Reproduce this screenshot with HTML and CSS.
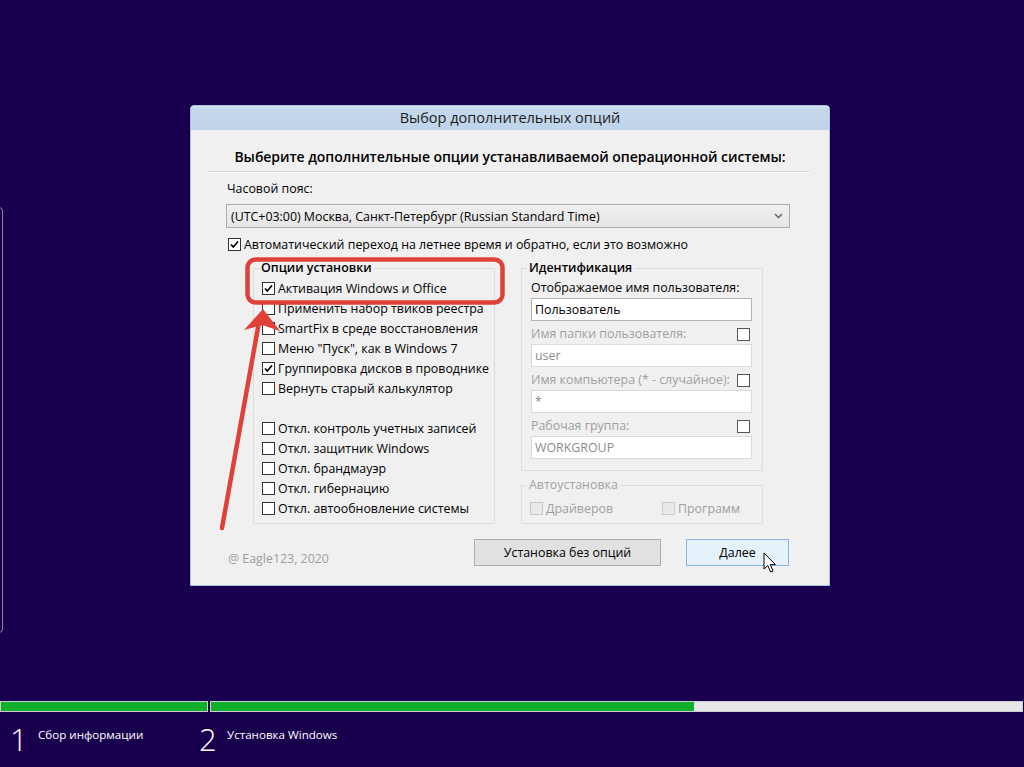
FILE: index.html
```html
<!DOCTYPE html>
<html lang="ru">
<head>
<meta charset="utf-8">
<title>Выбор дополнительных опций</title>
<link rel="stylesheet" href="styles.css">
</head>
<body>
<div class="screen">
  <div class="side-window"></div>

  <div class="dialog">
    <div class="titlebar">Выбор дополнительных опций</div>
    <div class="heading">Выберите дополнительные опции устанавливаемой операционной системы:</div>
    <div class="sep"></div>
    <div class="tz-label">Часовой пояс:</div>
    <div class="combo">
      <span>(UTC+03:00) Москва, Санкт-Петербург (Russian Standard Time)</span>
      <svg class="chev" width="9" height="6" viewBox="0 0 9 6"><polyline points="1,1 4.5,4.5 8,1" fill="none" stroke="#6d6d6d" stroke-width="1.6"/></svg>
    </div>
    <label class="row dst"><span class="cb on"><svg viewBox="0 0 11 11"><polyline points="2,5.5 4.3,8 9,2.5" fill="none" stroke="#000" stroke-width="1.7"/></svg></span>Автоматический переход на летнее время и обратно, если это возможно</label>

    <div class="groups">
      <fieldset class="grp opts">
        <legend>Опции установки</legend>
        <label class="row"><span class="cb on"><svg viewBox="0 0 11 11"><polyline points="2,5.5 4.3,8 9,2.5" fill="none" stroke="#000" stroke-width="1.7"/></svg></span>Активация Windows и Office</label>
        <label class="row"><span class="cb"></span>Применить набор твиков реестра</label>
        <label class="row"><span class="cb"></span>SmartFix в среде восстановления</label>
        <label class="row"><span class="cb"></span>Меню "Пуск", как в Windows 7</label>
        <label class="row"><span class="cb on"><svg viewBox="0 0 11 11"><polyline points="2,5.5 4.3,8 9,2.5" fill="none" stroke="#000" stroke-width="1.7"/></svg></span>Группировка дисков в проводнике</label>
        <label class="row"><span class="cb"></span>Вернуть старый калькулятор</label>
        <div class="row blank"></div>
        <label class="row"><span class="cb"></span>Откл. контроль учетных записей</label>
        <label class="row"><span class="cb"></span>Откл. защитник Windows</label>
        <label class="row"><span class="cb"></span>Откл. брандмауэр</label>
        <label class="row"><span class="cb"></span>Откл. гибернацию</label>
        <label class="row"><span class="cb"></span>Откл. автообновление системы</label>
      </fieldset>

      <div class="right-col">
        <fieldset class="grp ident">
          <legend>Идентификация</legend>
          <div class="flabel">Отображаемое имя пользователя:</div>
          <div class="field active">Пользователь</div>
          <div class="flabel dim">Имя папки пользователя:<span class="cb"></span></div>
          <div class="field">user</div>
          <div class="flabel dim">Имя компьютера (* - случайное):<span class="cb"></span></div>
          <div class="field">*</div>
          <div class="flabel dim">Рабочая группа:<span class="cb"></span></div>
          <div class="field">WORKGROUP</div>
        </fieldset>
        <fieldset class="grp auto">
          <legend>Автоустановка</legend>
          <div class="auto-row">
            <span class="arow"><span class="cb off"></span>Драйверов</span>
            <span class="arow"><span class="cb off"></span>Программ</span>
          </div>
        </fieldset>
      </div>
    </div>

    <div class="footer">
      <span class="copy">@ Eagle123, 2020</span>
      <button class="btn">Установка без опций</button>
      <button class="btn primary">Далее</button>
    </div>
  </div>

  <div class="progress">
    <div class="seg seg1"><div class="fill" style="width:100%"></div></div>
    <div class="seg seg2"><div class="fill" style="width:59.6%"></div></div>
  </div>
  <div class="steps">
    <div class="step s1"><span class="num">1</span><span class="stxt">Сбор информации</span></div>
    <div class="step s2"><span class="num">2</span><span class="stxt">Установка Windows</span></div>
  </div>

  <svg class="annot" width="1024" height="767" viewBox="0 0 1024 767">
    <rect x="247.5" y="259.5" width="255" height="43" rx="8" fill="none" stroke="#df4139" stroke-width="4.5"/>
    <line x1="222" y1="528" x2="259" y2="322" stroke="#df4139" stroke-width="4.5" stroke-linecap="round"/>
    <polygon points="263,309 280,331 262,325 244,330" fill="#df4139"/>
  </svg>

  <svg class="cursor" width="14" height="22" viewBox="0 0 14 22">
    <path d="M1 1 L1 17 L4.8 13.4 L7.6 20 L10 19 L7.3 12.6 L12.4 12.6 Z" fill="#fff" stroke="#000" stroke-width="1" stroke-linejoin="round"/>
  </svg>
</div>
</body>
</html>
```

FILE: styles.css
```css
* { box-sizing: border-box; }
html, body { margin: 0; padding: 0; }
body {
  background: #18004e;
  font-family: "Open Sans", "Noto Sans", "DejaVu Sans", sans-serif;
  font-size: 12.4px;
  color: #000;
}
.screen {
  position: relative;
  width: 1024px;
  height: 767px;
  overflow: hidden;
  display: flex;
  flex-direction: column;
}
.side-window {
  position: absolute;
  left: -10px;
  top: 207px;
  width: 13px;
  height: 426px;
  border: 1px solid #8a8497;
  border-radius: 4px;
}

/* dialog */
.dialog {
  margin: 105px 0 0 190px;
  width: 640px;
  height: 481px;
  background: #f0f0f0;
  border: 1px solid #a9c1da;
  border-radius: 4px 4px 0 0;
  display: flex;
  flex-direction: column;
}
.titlebar {
  height: 24px;
  line-height: 24px;
  text-align: center;
  font-size: 14.5px;
  color: #1a1a1a;
  background: linear-gradient(#d2e2f2 0, #c4d8ec 3px, #bfd4ea 100%);
  border-radius: 3px 3px 0 0;
  flex: none;
}
.heading {
  margin-top: 17px;
  line-height: 20px;
  text-align: center;
  font-size: 14px;
  font-weight: 600;
  letter-spacing: -0.05px;
}
.sep {
  margin: 4px 19px 0 18px;
  border-top: 1px solid #d6d6d6;
  border-bottom: 1px solid #fbfbfb;
}
.tz-label {
  margin: 8px 0 0 36px;
  line-height: 16px;
}
.combo {
  margin: 7px 39px 0 35px;
  height: 24px;
  border: 1px solid #adadad;
  background: linear-gradient(#efefef, #e6e6e6);
  display: flex;
  align-items: center;
  justify-content: space-between;
  padding: 0 6px 0 4px;
}
.chev { display: block; }

.row {
  display: flex;
  align-items: center;
  height: 20px;
  white-space: nowrap;
}
.row.dst {
  margin: 6px 0 0 37px;
}
.cb {
  width: 13px;
  height: 13px;
  border: 1px solid #333;
  background: #fff;
  margin-right: 3px;
  flex: none;
  display: inline-flex;
  align-items: center;
  justify-content: center;
}
.cb svg { width: 11px; height: 11px; display: block; }
.cb.off {
  border-color: #c9c9c9;
  background: #e9e9e9;
}

/* groups */
.groups {
  display: flex;
  align-items: flex-start;
  margin: 6px 0 0 62px;
  gap: 26px;
}
.grp {
  margin: 0;
  border: 1px solid #dcdcdc;
  width: 242px;
}
.grp legend {
  padding: 0 2px;
  line-height: 16px;
  font-weight: 600;
  font-size: 12.4px;
}
.opts {
  padding: 2px 0 5px 8px;
  height: 264px;
}
.opts legend { margin-left: -3px; }
.right-col {
  display: flex;
  flex-direction: column;
  gap: 6px;
}
.ident {
  padding: 4px 10px 11px 9px;
}
.ident legend { margin-left: -4px; }
.flabel {
  display: flex;
  align-items: center;
  justify-content: space-between;
  line-height: 16px;
  height: 16px;
  white-space: nowrap;
}
.flabel .cb { border-color: #555; margin: 0 2px 0 0; }
.flabel.dim { color: #9f9f9f; margin-top: 5px; }
.field {
  margin-top: 2px;
  height: 23px;
  border: 1px solid #dadada;
  background: #fff;
  color: #8c8c8c;
  padding: 0 3px;
  line-height: 21px;
}
.field.active {
  border-color: #b3b3b3;
  color: #000;
}
.auto { padding: 7px 8px 7px 8px; }
.auto legend { font-weight: 400; color: #a3a3a3; margin-left: -3px; }
.auto-row {
  display: flex;
  height: 16px;
  align-items: center;
  color: #9f9f9f;
}
.arow { display: flex; align-items: center; }
.arow:first-child { width: 132px; }

/* footer */
.footer {
  display: flex;
  align-items: center;
  margin: 15px 40px 0 36px;
  height: 27px;
}
.copy {
  color: #9d9d9d;
  flex: 1;
  padding-left: 1px;
  align-self: flex-end;
  line-height: 16px;
  margin-bottom: -1px;
}
.btn {
  font: inherit;
  height: 27px;
  border: 1px solid #adadad;
  background: #e1e1e1;
  color: #000;
  padding: 0;
  width: 187px;
}
.btn.primary {
  margin-left: 25px;
  width: 103px;
  background: #e5f1fb;
  border-color: #87b6e4;
}

/* progress */
.progress {
  margin-top: 115px;
  display: flex;
  height: 11px;
  gap: 2px;
  padding-right: 1px;
}
.seg {
  height: 11px;
  background: #e6e6e6;
  border: 1px solid #cdcdd6;
}
.seg1 { width: 208px; }
.seg2 { flex: 1; }
.fill {
  height: 100%;
  background: #11b02c;
}
.steps {
  display: flex;
  margin-top: 9px;
  color: #fff;
}
.step {
  display: flex;
  align-items: flex-start;
  width: 189px;
}
.s1 { margin-left: 10px; }
.num {
  font-size: 31px;
  font-weight: 300;
  line-height: 36px;
  width: 28px;
}
.stxt {
  line-height: 16px;
  padding-top: 6px;
  font-size: 11.6px;
}

/* overlays */
.annot {
  position: absolute;
  left: 0;
  top: 0;
  pointer-events: none;
}
.cursor {
  position: absolute;
  left: 763px;
  top: 552px;
  pointer-events: none;
}
```
